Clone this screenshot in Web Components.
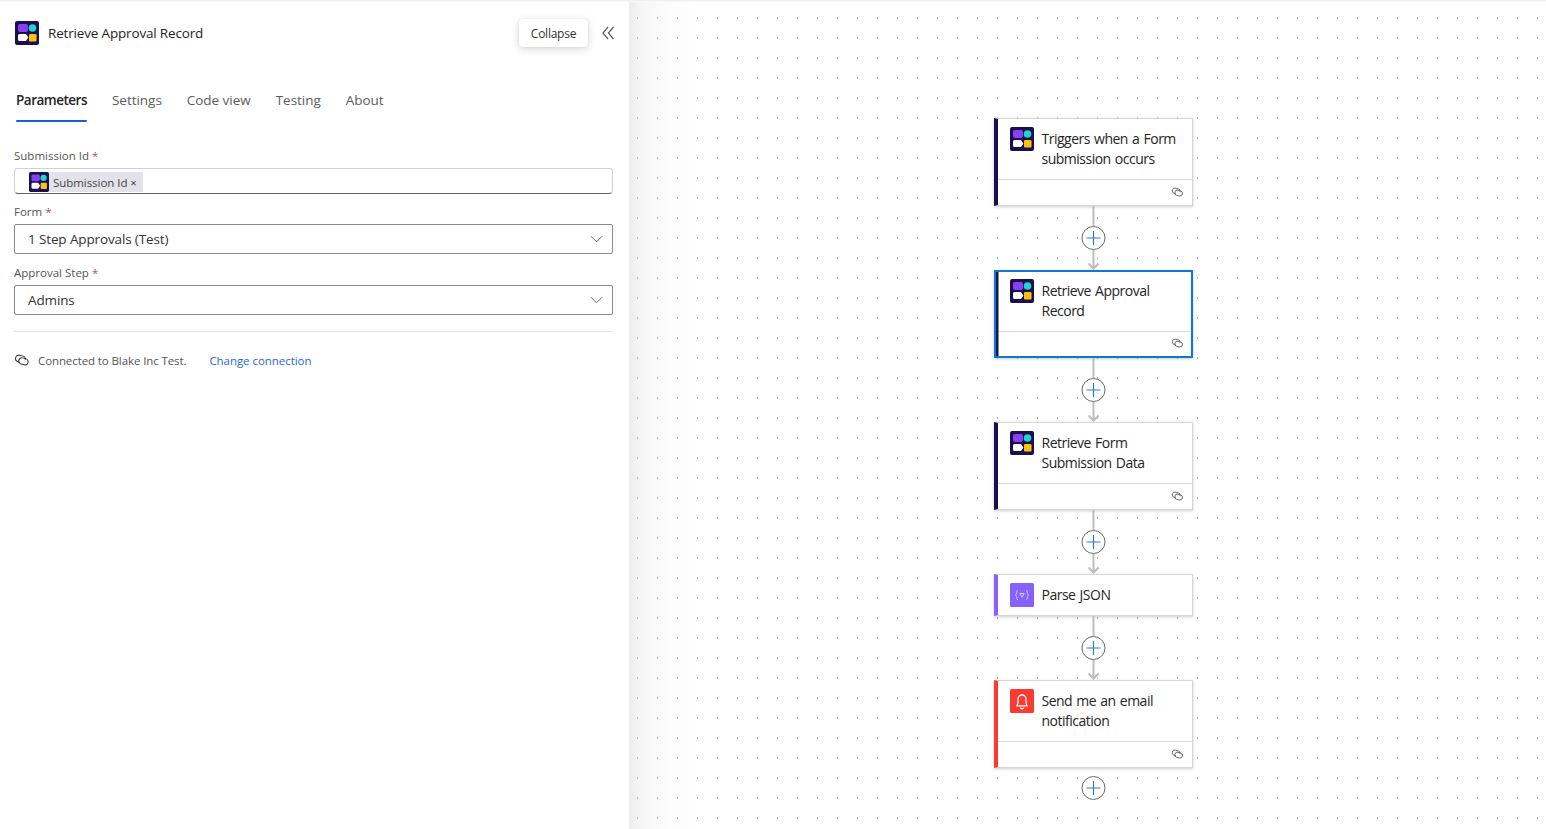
<!DOCTYPE html>
<html lang="en">
<head>
<meta charset="utf-8">
<title>Retrieve Approval Record</title>
<style>
  html, body { margin: 0; height: 100%; overflow: hidden; background: #fff; }
  body { font-family: "Open Sans", "Noto Sans", sans-serif; color: #242424; }
</style>
</head>
<body>
<designer-app>
  <side-panel slot="panel">
    <panel-head title="Retrieve Approval Record"></panel-head>
    <panel-tabs></panel-tabs>
    <form-field label="Submission Id">
      <token-input text="Submission Id"></token-input>
    </form-field>
    <form-field label="Form" style="margin-top:10px">
      <select-box value="1 Step Approvals (Test)"></select-box>
    </form-field>
    <form-field label="Approval Step" style="margin-top:11px">
      <select-box value="Admins"></select-box>
    </form-field>
    <connection-row></connection-row>
  </side-panel>
  <flow-canvas slot="canvas">
    <flow-node kind="brand" footer>Triggers when a Form<br>submission occurs</flow-node>
    <flow-edge></flow-edge>
    <flow-node kind="brand" footer selected>Retrieve Approval<br>Record</flow-node>
    <flow-edge></flow-edge>
    <flow-node kind="brand" footer>Retrieve Form<br>Submission Data</flow-node>
    <flow-edge></flow-edge>
    <flow-node kind="json">Parse JSON</flow-node>
    <flow-edge></flow-edge>
    <flow-node kind="bell" footer>Send me an email<br>notification</flow-node>
    <flow-edge last></flow-edge>
  </flow-canvas>
</designer-app>

<script>
const LINK_ICON = `<svg viewBox="0 0 16 12" fill="none" stroke="currentColor" stroke-width="1"><g transform="rotate(14 8 6)"><path d="M6.500 8.600H4.600A3.300 3.300 0 0 1 4.600 2H8a3 3 0 0 1 3 3"/><path d="M5 7A3 3 0 0 1 8 3.800h3.200a3.200 3.200 0 0 1 0 6.400H8A3 3 0 0 1 5 7Z"/></g></svg>`;

class BrandIcon extends HTMLElement {
  constructor() {
    super();
    this.attachShadow({ mode: "open" });
    const kind = this.getAttribute("kind") || "brand";
    let art = "";
    if (kind === "brand") {
      art = `<rect width="24" height="24" rx="2" fill="#1b0f52"/>
        <rect x="3" y="3" width="10" height="8" rx="2" fill="#8a3ff0"/>
        <circle cx="17.500" cy="7" r="3.800" fill="#1fd3cf"/>
        <path d="M4.500 13H11l2.400 3.500L11 20H4.500A1.500 1.500 0 0 1 3 18.500V14.500A1.500 1.500 0 0 1 4.500 13Z" fill="#fff"/>
        <rect x="14" y="13" width="7.500" height="7.500" rx="1.200" fill="#fdc30f"/>`;
    } else if (kind === "json") {
      art = `<rect width="24" height="24" rx="1.500" fill="#8661fb"/>
        <g fill="none" stroke="#d9ccff" stroke-width="1">
          <path d="M8 7.500c-1.300 0-1.300.8-1.300 1.800 0 1.200-.3 2.200-1.200 2.700.9.500 1.200 1.500 1.200 2.700 0 1 0 1.800 1.300 1.800"/>
          <path d="M16 7.500c1.300 0 1.300.8 1.300 1.800 0 1.200.3 2.200 1.200 2.700-.9.500-1.200 1.500-1.200 2.700 0 1 0 1.800-1.300 1.800"/>
          <path d="M9.800 10.500h4.400L12 14.200Z"/>
        </g>`;
    } else {
      art = `<rect width="24" height="24" rx="1.500" fill="#fb3a30"/>
        <path d="M6.800 16.800c1-1 1.200-2.200 1.200-3.800v-3a4 4 0 0 1 8 0v3c0 1.600.2 2.800 1.200 3.800Z" fill="none" stroke="#fff" stroke-width="1.300" stroke-linejoin="round"/>
        <path d="M10.400 18.600a1.700 1.700 0 0 0 3.200 0" fill="none" stroke="#fff" stroke-width="1.300"/>`;
    }
    this.shadowRoot.innerHTML = `
      <style>
        :host { display: block; width: 24px; height: 24px; flex: none; }
        svg { display: block; width: 100%; height: 100%; }
      </style>
      <svg viewBox="0 0 24 24">${art}</svg>
    `;
  }
}

class DesignerApp extends HTMLElement {
  constructor() {
    super();
    this.attachShadow({ mode: "open" });
    this.shadowRoot.innerHTML = `
      <style>
        :host { display: flex; height: 829px; width: 1546px; position: relative; }
        .top { position: absolute; left: 0; right: 0; top: 0; height: 2px; background: linear-gradient(#ececec, #fafafa); z-index: 3; }
      </style>
      <div class="top"></div>
      <slot name="panel"></slot>
      <slot name="canvas"></slot>
    `;
  }
}

class SidePanel extends HTMLElement {
  constructor() {
    super();
    this.attachShadow({ mode: "open" });
    this.shadowRoot.innerHTML = `
      <style>
        :host { display: block; width: 629px; flex: none; box-sizing: border-box; padding: 0 16px 0 14px; background: #fff; position: relative; z-index: 2; }
      </style>
      <slot></slot>
    `;
  }
}

class PanelHead extends HTMLElement {
  constructor() {
    super();
    this.attachShadow({ mode: "open" });
    this.shadowRoot.innerHTML = `
      <style>
        :host { display: flex; align-items: center; height: 66px; padding-left: 1px; }
        .title { margin-left: 9px; padding-bottom: 1px; font-size: 13.500px; color: #242424; letter-spacing: -0.17px; white-space: nowrap; }
        .tip { margin-left: auto; width: 69px; height: 28px; display: flex; align-items: center; justify-content: center; font-size: 12px; color: #333; background: #fff; border-radius: 4px; box-shadow: 0 2px 8px rgba(0,0,0,.16), 0 0 2px rgba(0,0,0,.1); letter-spacing: -0.25px; }
        svg { margin-left: 14px; margin-right: -1px; width: 12px; height: 14px; display: block; }
      </style>
      <brand-icon></brand-icon>
      <span class="title">${this.getAttribute("title")}</span>
      <span class="tip">Collapse</span>
      <svg viewBox="0 0 12 14" fill="none" stroke="#5c5c5c" stroke-width="1.200"><path d="M6 1 .9 7 6 13"/><path d="M11.500 1 6.400 7l5.100 6"/></svg>
    `;
  }
}

class PanelTabs extends HTMLElement {
  constructor() {
    super();
    this.attachShadow({ mode: "open" });
    const tabs = ["Parameters", "Settings", "Code view", "Testing", "About"];
    this.shadowRoot.innerHTML = `
      <style>
        :host { display: flex; gap: 25px; height: 82px; padding-left: 2px; box-sizing: border-box; padding-top: 24px; }
        span { font-size: 13.500px; line-height: 20px; color: #5c5c5c; position: relative; white-space: nowrap; height: 33px; letter-spacing: -0.03px; }
        span.on { color: #242424; font-weight: 600; letter-spacing: -0.5px; }
        span.on::after { content: ""; position: absolute; left: 0; right: 0; top: 29.500px; height: 2.500px; border-radius: 2px; background: #1a5fd8; }
      </style>
      ${tabs.map((t, i) => `<span class="${i === 0 ? "on" : ""}">${t}</span>`).join("")}
    `;
  }
}

class FormField extends HTMLElement {
  constructor() {
    super();
    this.attachShadow({ mode: "open" });
    this.shadowRoot.innerHTML = `
      <style>
        :host { display: block; }
        label { display: block; font-size: 11.500px; line-height: 16px; color: #555; margin-bottom: 4px; }
        i { font-style: normal; color: #c4504e; }
      </style>
      <label>${this.getAttribute("label")} <i>*</i></label>
      <slot></slot>
    `;
  }
}

class TokenInput extends HTMLElement {
  constructor() {
    super();
    this.attachShadow({ mode: "open" });
    this.shadowRoot.innerHTML = `
      <style>
        :host { display: flex; align-items: center; height: 26px; box-sizing: border-box; border: 1px solid #d1d1d1; border-bottom-color: #616161; border-radius: 4px; padding-left: 14px; }
        .tok { display: flex; align-items: center; height: 20px; margin-top: 2px; background: #e3e2ea; font-size: 11.500px; color: #444; padding-right: 6px; white-space: nowrap; letter-spacing: -0.05px; }
        brand-icon { width: 20px; height: 20px; margin-right: 4px; }
      </style>
      <span class="tok"><brand-icon></brand-icon>${this.getAttribute("text")} ×</span>
    `;
  }
}

class SelectBox extends HTMLElement {
  constructor() {
    super();
    this.attachShadow({ mode: "open" });
    this.shadowRoot.innerHTML = `
      <style>
        :host { display: flex; align-items: center; height: 30px; box-sizing: border-box; border: 1px solid #8a8a8a; border-radius: 2px; padding: 0 9px 0 13px; font-size: 13.500px; color: #333; letter-spacing: -0.13px; }
        span { flex: 1; }
        svg { width: 13px; height: 8px; display: block; }
      </style>
      <span>${this.getAttribute("value")}</span>
      <svg viewBox="0 0 14 8" fill="none" stroke="#616161" stroke-width="1"><path d="M1 1l6 6 6-6"/></svg>
    `;
  }
}

class ConnectionRow extends HTMLElement {
  constructor() {
    super();
    this.attachShadow({ mode: "open" });
    this.shadowRoot.innerHTML = `
      <style>
        :host { display: flex; align-items: center; margin-top: 16px; border-top: 1px solid #e3e3e3; padding-top: 20px; font-size: 11.500px; line-height: 18px; color: #555; letter-spacing: -0.1px; }
        svg { width: 16px; height: 12px; margin: -2px 8px 0 0; display: block; color: #333; }
        a { margin-left: 23px; color: #2b66d9; text-decoration: none; letter-spacing: -0.05px; }
      </style>
      ${LINK_ICON}
      <span>Connected to Blake Inc Test.</span>
      <a>Change connection</a>
    `;
  }
}

class FlowCanvas extends HTMLElement {
  constructor() {
    super();
    this.attachShadow({ mode: "open" });
    this.shadowRoot.innerHTML = `
      <style>
        :host { display: flex; flex-direction: column; align-items: flex-start; flex: 1; box-sizing: border-box; padding: 118px 0 0 365px; overflow: hidden; position: relative;
          background: linear-gradient(90deg, #ececec, #f7f7f7 14px, #fcfcfc 40px, #fff 70px); }
        .dots { position: absolute; inset: 0; width: 100%; height: 100%; }
        ::slotted(*) { position: relative; }
      </style>
      <svg class="dots">
        <defs><pattern id="dot" x="8" y="17" width="20" height="20" patternUnits="userSpaceOnUse"><rect width="1" height="2" fill="#bdbdbd"/></pattern></defs>
        <rect width="100%" height="100%" fill="url(#dot)"/>
      </svg>
      <slot></slot>
    `;
  }
}

class FlowNode extends HTMLElement {
  constructor() {
    super();
    this.attachShadow({ mode: "open" });
    const kind = this.getAttribute("kind");
    const bar = { brand: "#1b0f52", json: "#8661fb", bell: "#fb3a30" }[kind];
    const foot = this.hasAttribute("footer");
    this.shadowRoot.innerHTML = `
      <style>
        :host { display: block; width: 199px; box-sizing: border-box; background: #fff; border: 1px solid #d6d6d6; border-left: 4px solid ${bar}; box-shadow: 0 1px 3px rgba(0,0,0,.2); flex: none; }
        :host([selected]) { border: 2px solid #0f78d4; box-shadow: inset 2.500px 0 0 ${bar}, 0 1px 3px rgba(0,0,0,.2); }
        .main { display: flex; gap: 8px; padding: 8px 8px 0 11.500px; height: ${foot ? 52 : 32}px; font-size: 14px; line-height: 20px; color: #242424; letter-spacing: -0.5px; word-spacing: 1px; }
        .main div { padding-top: 2px; white-space: nowrap; }
        .foot { height: 25px; border-top: 1px solid #dcdcdc; display: flex; justify-content: flex-end; align-items: center; padding-right: 8px; color: #555; }
        .foot svg { width: 13px; height: 10px; display: block; margin-bottom: 2px; }
        :host([selected]) .main { padding: 7px 7px 0 13.500px; height: 52px; }
        :host([selected]) .foot { height: 24px; padding-right: 7px; margin-left: 2.500px; }
      </style>
      <div class="main"><brand-icon kind="${kind}"></brand-icon><div><slot></slot></div></div>
      ${foot ? `<div class="foot">${LINK_ICON}</div>` : ""}
    `;
  }
}

class FlowEdge extends HTMLElement {
  constructor() {
    super();
    this.attachShadow({ mode: "open" });
    const last = this.hasAttribute("last");
    const cy = last ? 20 : 32;
    this.shadowRoot.innerHTML = `
      <style>
        :host { display: block; width: 200px; height: 64px; flex: none; }
        svg { display: block; }
      </style>
      <svg width="200" height="64" viewBox="0 0 200 64" fill="none">
        ${last ? "" : `<path d="M99.500 0V63" stroke="#bdbdbd" stroke-width="2"/><path d="M94.500 57.500l5 5 5-5" stroke="#bdbdbd" stroke-width="2"/>`}
        <circle cx="99.500" cy="${cy}" r="11.500" fill="#fff" stroke="#6b6b6b"/>
        <path d="M92.500 ${cy}h14M99.500 ${cy - 7}v14" stroke="#2b7cd3" stroke-width="1.200"/>
      </svg>
    `;
  }
}

customElements.define("brand-icon", BrandIcon);
customElements.define("designer-app", DesignerApp);
customElements.define("side-panel", SidePanel);
customElements.define("panel-head", PanelHead);
customElements.define("panel-tabs", PanelTabs);
customElements.define("form-field", FormField);
customElements.define("token-input", TokenInput);
customElements.define("select-box", SelectBox);
customElements.define("connection-row", ConnectionRow);
customElements.define("flow-canvas", FlowCanvas);
customElements.define("flow-node", FlowNode);
customElements.define("flow-edge", FlowEdge);
</script>
</body>
</html>
